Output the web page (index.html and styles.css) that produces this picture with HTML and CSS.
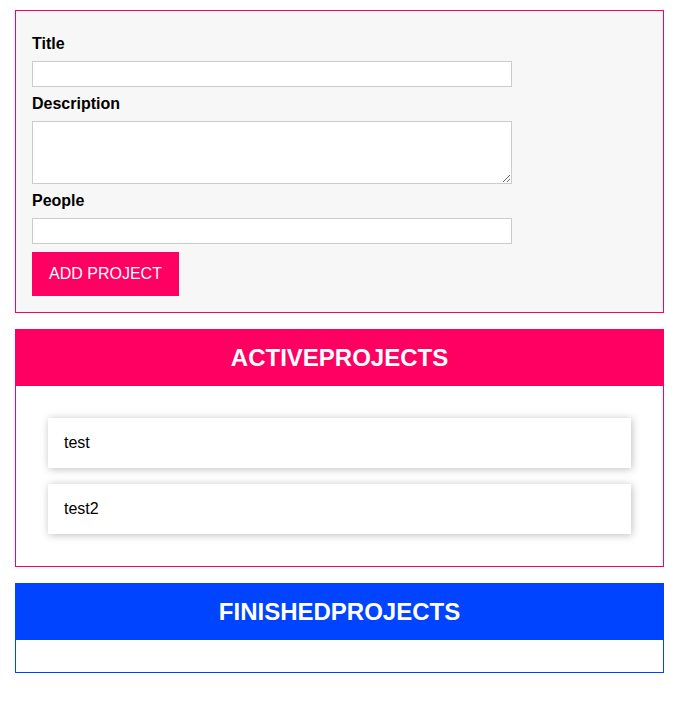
FILE: index.html
```html
<!DOCTYPE html>
<html lang="en">
<head>
  <meta charset="UTF-8">
  <meta name="viewport" content="width=device-width, initial-scale=1.0">
  <title>ProjectManager</title>
  <link rel="stylesheet" href="styles.css">
</head>
<body>
  <div id="app">
    <form class="user-input">
      <div class="form-control">
        <label for="title">Title</label>
        <input type="text" id="title">
      </div>
      <div class="form-control">
        <label for="description">Description</label>
        <textarea id="description" rows="3"></textarea>
      </div>
      <div class="form-control">
        <label for="people">People</label>
        <input type="number" id="people" step="1" min="0" max="10">
      </div>
      <button type="submit">ADD PROJECT</button>
    </form>

    <section class="projects" id="active-projects">
      <header>
        <h2>ACTIVEPROJECTS</h2>
      </header>
      <ul>
        <li>test</li>
        <li>test2</li>
      </ul>
    </section>

    <section class="projects" id="finished-projects">
      <header>
        <h2>FINISHEDPROJECTS</h2>
      </header>
      <ul></ul>
    </section>
  </div>
</body>
</html>
```

FILE: styles.css
```css
* {
  box-sizing: border-box;
}

html {
  font-family: "Liberation Sans", Arial, sans-serif;
}

body {
  margin: 0;
}

#app {
  padding: 10px 12px 0 15px;
}

label,
input,
textarea {
  display: block;
  margin: 0.5rem 0;
}

label {
  font-weight: bold;
}

input,
textarea {
  font: inherit;
  padding: 0.2rem 0.4rem;
  width: 100%;
  max-width: 30rem;
  border: 1px solid #ccc;
  background: white;
}

input:focus,
textarea:focus {
  outline: none;
  background: #fff5f9;
}

button {
  font: inherit;
  background: #ff0062;
  border: 1px solid #ff0062;
  cursor: pointer;
  color: white;
  padding: 0.75rem 1rem;
}

.user-input {
  margin: 0 0 1rem 0;
  padding: 1rem;
  border: 1px solid #ff0062;
  background: #f7f7f7;
}

.projects {
  margin: 0 0 1rem 0;
  border: 1px solid #ff0062;
}

.projects header {
  background: #ff0062;
  height: 3.5rem;
  display: flex;
  justify-content: center;
  align-items: center;
}

#finished-projects {
  border-color: #0044ff;
}

#finished-projects header {
  background: #0044ff;
}

.projects h2 {
  margin: 0;
  color: white;
  font-size: 24px;
}

.projects ul {
  list-style: none;
  margin: 0;
  padding: 1rem;
}

.projects li {
  box-shadow: 1px 1px 8px rgba(0, 0, 0, 0.26);
  padding: 1rem;
  margin: 1rem;
}
```
